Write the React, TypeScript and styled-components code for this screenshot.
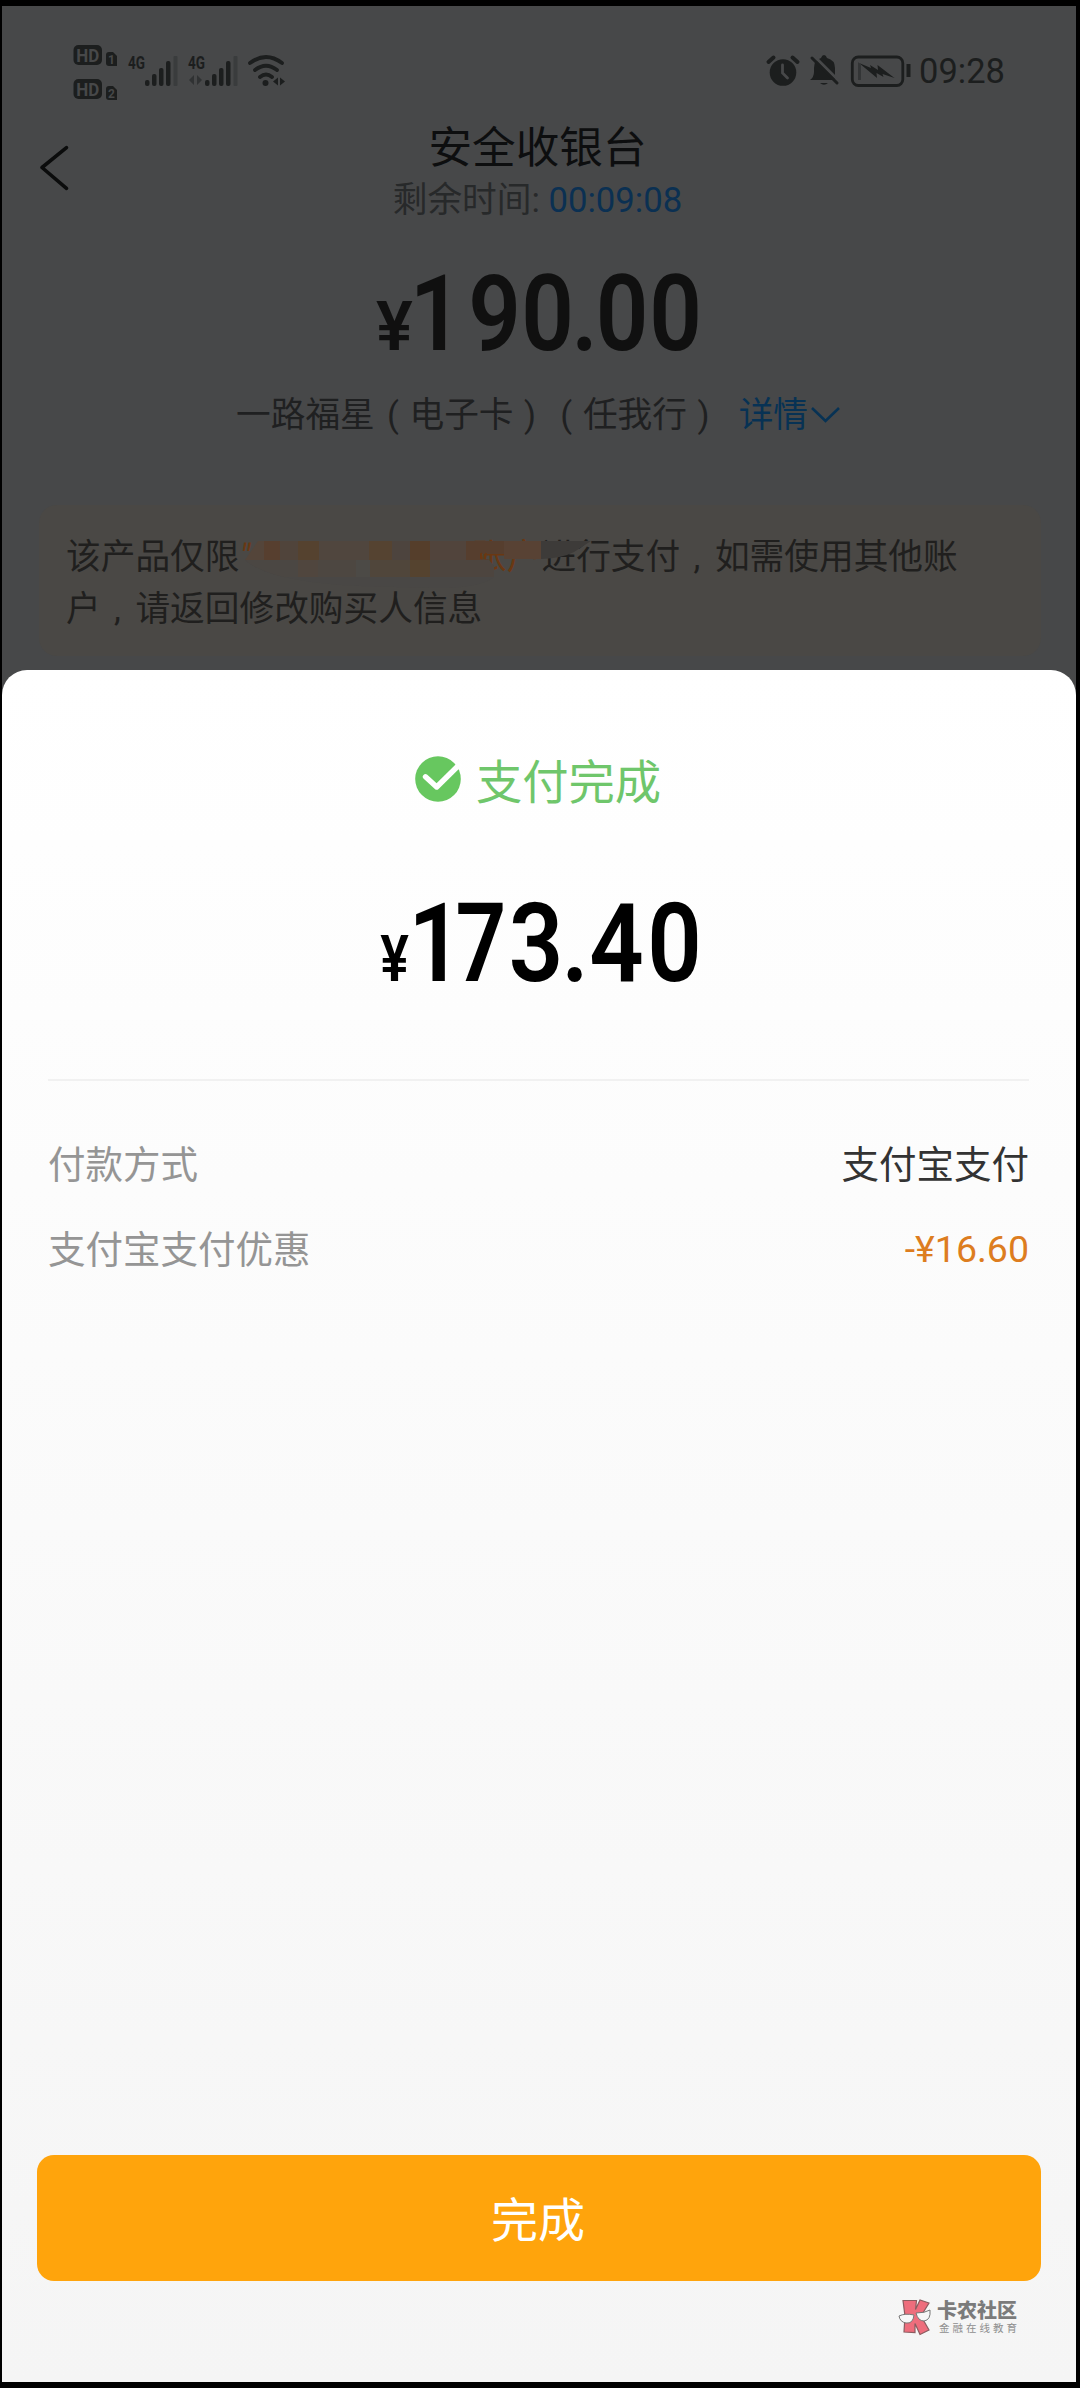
import React from 'react';
import styled, { createGlobalStyle } from 'styled-components';

const Global = createGlobalStyle`
  html, body { margin: 0; padding: 0; background: #000; }
  * { box-sizing: border-box; }
  svg { display: block; flex: none; overflow: visible; }
`;

const sans = `Roboto, "Noto Sans CJK SC", sans-serif`;

const Page = styled.main`
  width: 1080px;
  height: 2388px;
  padding: 6px 4px 6px 2px;
  background: #000;
  font-family: ${sans};
  overflow: hidden;
`;

const Screen = styled.div`
  height: 2376px;
  background: #474849;
  display: flex;
  flex-direction: column;
`;

const Cashier = styled.section`
  height: 664px;
  display: flex;
  flex-direction: column;
  flex: none;
`;

const StatusBar = styled.header`
  height: 104px;
  padding: 38px 71px 0 72px;
  display: flex;
  justify-content: space-between;
  align-items: flex-start;
`;

const StatusGroup = styled.div<{ $gap: number; $top?: number }>`
  display: flex;
  align-items: center;
  gap: ${(p) => p.$gap}px;
  padding-top: ${(p) => p.$top ?? 0}px;
`;

const Clock = styled.span`
  font-size: 34.5px;
  line-height: 40px;
  color: #1c1e1e;
  margin-left: -3px;
`;

const TitleBar = styled.div`
  height: 118px;
  display: grid;
  grid-template-columns: 110px 1fr 113px;
`;

const BackButton = styled.button`
  border: 0;
  background: none;
  padding: 36px 0 0 38px;
  display: flex;
  align-items: flex-start;
`;

const TitleText = styled.div`
  text-align: center;
`;

const Title = styled.h1`
  margin: 10px 0 0;
  font-weight: 400;
  font-size: 43.6px;
  line-height: 58px;
  color: #0d0e0f;
`;

const Countdown = styled.div`
  font-size: 34.7px;
  line-height: 44px;
  color: #27292a;
  white-space: pre;
`;

const CountdownTime = styled.span`
  color: #0b3052;
`;

const Amount = styled.div<{ $top: number; $height: number; $color: string; $left: number }>`
  margin-top: ${(p) => p.$top}px;
  height: ${(p) => p.$height}px;
  padding-left: ${(p) => p.$left}px;
  display: flex;
  align-items: baseline;
  line-height: ${(p) => p.$height}px;
  color: ${(p) => p.$color};
  font-family: Roboto, sans-serif;
  font-weight: 600;
`;

const Glyph = styled.span<{ $w: number; $gap: number; $size: number; $squeeze: number }>`
  width: ${(p) => p.$w}px;
  margin-right: ${(p) => p.$gap}px;
  flex: none;
  display: flex;
  justify-content: center;
  font-size: ${(p) => p.$size}px;
  transform: scaleX(${(p) => p.$squeeze});
`;

const Product = styled.div`
  height: 50px;
  margin-top: 16px;
  padding-left: 234px;
  display: flex;
  align-items: center;
  font-size: 34.7px;
  line-height: 50px;
  color: #1f2021;
  white-space: nowrap;
`;

const Punct = styled.span<{ $shift: number }>`
  display: inline-block;
  width: 1em;
  text-indent: ${(p) => p.$shift}em;
`;

const DetailLink = styled.a`
  margin-left: 17px;
  display: flex;
  align-items: center;
  gap: 3px;
  color: #073254;
`;

const Notice = styled.div`
  position: relative;
  margin: 65px 35px 0 37px;
  height: 151px;
  padding: 26px 20px 0 27px;
  border-radius: 18px;
  background: #4a4845;
  color: #201f1e;
  font-size: 34.7px;
  line-height: 52px;
  white-space: nowrap;
`;

const NoticeLine = styled.div`
  display: flex;
`;

const Payer = styled.span`
  width: 302px;
  flex: none;
  display: flex;
  justify-content: space-between;
  color: #6a3813;
`;

const OpenQuote = styled.span`
  font-style: italic;
`;

const Smudge = styled.svg`
  position: absolute;
  left: 191px;
  top: 0;
`;

const Sheet = styled.section`
  flex: 1;
  border-radius: 25px 25px 0 0;
  background: linear-gradient(#ffffff, #f5f5f5);
  display: flex;
  flex-direction: column;
`;

const Result = styled.div`
  margin-top: 79px;
  height: 60px;
  padding-right: 2px;
  display: flex;
  justify-content: center;
  align-items: center;
  gap: 15px;
  color: #6fc66b;
  font-size: 46.3px;
  line-height: 60px;
`;

const ResultText = styled.span`
  padding-top: 8px;
`;

const Details = styled.dl`
  margin: 70px 47px 0 46px;
  padding-top: 38px;
  border-top: 2px solid #f1f1f1;
`;

const DetailRow = styled.div`
  height: 85px;
  display: flex;
  justify-content: space-between;
  align-items: center;
  font-size: 37.5px;
`;

const Label = styled.dt`
  color: #959595;
`;

const Value = styled.dd<{ $accent?: boolean }>`
  margin: 0;
  padding-top: ${(p) => (p.$accent ? 5 : 0)}px;
  color: ${(p) => (p.$accent ? '#dd7d1f' : '#333')};
`;

const DoneButton = styled.button`
  margin: auto 35px 0 35px;
  height: 126px;
  border: 0;
  border-radius: 17px;
  background: #ffa40c;
  color: #fff;
  font-family: ${sans};
  font-size: 47px;
  line-height: 121px;
  padding: 5px 2px 0 0;
`;

const Footer = styled.footer`
  height: 101px;
  padding: 18px 59px 0 0;
  display: flex;
  justify-content: flex-end;
  gap: 5px;
`;

const BrandText = styled.div`
  display: flex;
  flex-direction: column;
  font-family: "Noto Sans CJK SC", sans-serif;
  white-space: nowrap;
`;

const BrandName = styled.span`
  font-size: 20px;
  line-height: 22px;
  font-weight: 900;
  color: #7b7b7b;
`;

const BrandTag = styled.span`
  font-size: 10.5px;
  line-height: 13px;
  letter-spacing: 3px;
  margin-left: 2px;
  width: 78px;
  color: #8e8e8e;
`;

const ink = '#1c1e1e';

const HdBadges = () => (
  <svg width="44" height="56" viewBox="74 44 44 56" fontFamily="Roboto" fontWeight="700" fill="#474849">
    {[0, 34].map((dy, i) => (
      <g key={dy} transform={`translate(0 ${dy})`}>
        <rect x="73.5" y="45" width="28.5" height="20" rx="5" fill={ink} />
        <text x="87.7" y="62" fontSize="18" textAnchor="middle" textLength="23" lengthAdjust="spacingAndGlyphs">HD</text>
        <path d="M106 55q0-3 3-3h4l4 4v10h-8q-3 0-3-3z" fill={ink} />
        <text x="111.5" y="64" fontSize="12" textAnchor="middle">{i + 1}</text>
      </g>
    ))}
  </svg>
);

const Signal = ({ data }: { data?: boolean }) => (
  <svg width="50" height="56" viewBox="128 44 50 56" fill={ink}>
    <text x="128" y="69" fontSize="19" fontFamily="Roboto" fontWeight="700" textLength="17" lengthAdjust="spacingAndGlyphs">4G</text>
    {data && <path d="M134 75v10l-5-5zM137 75v10l5-5z" fill="#303233" />}
    <rect x="145" y="80" width="4.5" height="6" rx="2" />
    <rect x="152" y="74" width="4.5" height="12" rx="2" />
    <rect x="159" y="68" width="4.5" height="18" rx="2" />
    <rect x="166" y="61" width="4.5" height="25" rx="2" />
    <rect x="173.5" y="56" width="4" height="30" rx="1" fill="#3a3c3d" />
  </svg>
);

const Wifi = () => (
  <svg width="38" height="56" viewBox="248 44 38 56" fill="none" stroke={ink} strokeWidth="3.8" strokeLinecap="round">
    <path d="M250 63Q266 51 282 63M255 70Q266 61.500 277 70M260 77Q266 72 272 77" />
    <circle cx="265.500" cy="83" r="3" fill={ink} stroke="none" />
    <path d="M278 77.500v8l-5-4zM280 77.500v8l5-4z" fill={ink} stroke="none" />
  </svg>
);

const Alarm = () => (
  <svg width="32" height="32" viewBox="768 55 32 32">
    <circle cx="784" cy="72.500" r="13.300" fill={ink} />
    <path d="M769.500 62l5-4.500M798.500 62l-5-4.500" stroke={ink} strokeWidth="4" strokeLinecap="round" />
    <path d="M783.500 65v8l5 5" stroke="#474849" strokeWidth="2.800" fill="none" strokeLinecap="round" />
  </svg>
);

const BellOff = () => (
  <svg width="30" height="32" viewBox="811 55 30 32">
    <path d="M811 80q4-3 4-8v-4q0-8 7-10 1-3 3-3t3 3q8 2 8 10v12zM821 83h8q-4 3.500-8 0z" fill={ink} />
    <path d="M815 56l26 26" stroke="#474849" strokeWidth="3" />
    <path d="M813 58l25 25" stroke={ink} strokeWidth="3" strokeLinecap="round" />
  </svg>
);

const Battery = () => (
  <svg width="60" height="32" viewBox="852 55 60 32">
    <rect x="853.300" y="57" width="50.500" height="28.500" rx="6" fill="none" stroke={ink} strokeWidth="2.800" />
    <path d="M909.500 64v13" stroke={ink} strokeWidth="4" />
    <path d="M859 62v18h3v-15z" fill="#333536" />
    <path d="M860 63l12 5-1-3 8 5-.500-5 17 13-12-4 1 3-7-4 .500 5z" fill={ink} />
  </svg>
);

const BackIcon = () => (
  <svg width="29" height="45" viewBox="0 0 29 45" fill="none" stroke="#0b0c0c" strokeWidth="3.600" strokeLinecap="round" strokeLinejoin="round">
    <path d="M26.500 1.700L2 21.500l24.500 20.800" />
  </svg>
);

const CheckIcon = () => (
  <svg width="46" height="46" viewBox="0 0 46 46">
    <circle cx="23" cy="23" r="22.800" fill="#67c75f" />
    <path d="M10.500 20.800L21.700 31 44 9" fill="none" stroke="#fff" strokeWidth="5.400" strokeLinecap="round" strokeLinejoin="round" />
  </svg>
);

const BrandMark = () => (
  <svg width="34" height="36" viewBox="0 0 34 36">
    <path d="M5 1.500h13.500l-1 9L22 1l9 3-8 13 8 14-9 4.500-5-11v9L6 33l1-16z" fill="#ee6d7c" stroke="#8b5c60" strokeWidth="1.200" />
    <path d="M1 17q6-3 15-1-1 9-8 8-6-1-7-7zM18 14q9 0 14-3 1 10-6 11-6 0-8-8z" fill="#f7f7f7" stroke="#777" strokeWidth="1" />
  </svg>
);

const upperTiles: [number, number, string][] = [
  [244, 20, '#54453a'], [264, 16, '#573f2f'], [280, 18, '#50443b'], [298, 21, '#55422f'],
  [319, 50, '#50463e'], [369, 23, '#554331'], [392, 18, '#4d443e'], [410, 20, '#553e2b'],
  [430, 36, '#51443c'], [466, 38, '#563e2e'], [504, 37, '#584234'], [541, 50, '#3d3b39'],
];
const lowerTiles: [number, number, string][] = [
  [244, 54, '#4b4743'], [298, 20, '#50463e'], [318, 38, '#4d4741'], [356, 14, '#4c4a46'],
  [370, 40, '#50463b'], [410, 20, '#55432f'], [430, 66, '#4d453f'],
];

const Mosaic = () => (
  <Smudge width="370" height="110" viewBox="230 505 370 110">
    <defs>
      <clipPath id="stroke">
        <path d="M258 541H591L574 552Q563 558 541 559H504V554H480V559H488L494 566V577Q480 589 430 588L360 586Q270 582 245 560Z" />
      </clipPath>
    </defs>
    <g clipPath="url(#stroke)">
      <rect x="240" y="560" width="256" height="30" fill="#494745" />
      {lowerTiles.map(([x, w, c]) => <rect key={x} x={x} y="559" width={w} height="18" fill={c} />)}
      {upperTiles.map(([x, w, c]) => <rect key={x} x={x} y="541" width={w} height={x >= 504 ? 18 : 19} fill={c} />)}
    </g>
    <path d="M481 553l1 6M486 553l-1 6" stroke="#6a3813" strokeWidth="2" />
  </Smudge>
);

type Cell = [ch: string, width: number, gap: number];

const total: Cell[] = [['¥', 37, 0], ['1', 46, 9], ['9', 53, 0], ['0', 53, 0], ['.', 21, 0], ['0', 54, 0], ['0', 53, 0]];
const paid: Cell[] = [['¥', 29, 4], ['1', 45, 0], ['7', 46, 7], ['3', 50, 3], ['.', 22, 5], ['4', 51, 7], ['0', 51, 0]];

const Price = ({ cells, size, yen, yenSqueeze, squeeze }: { cells: Cell[]; size: number; yen: number; yenSqueeze: number; squeeze: number }) => (
  <>
    {cells.map(([ch, w, gap], i) => (
      <Glyph
        key={i}
        $w={w}
        $gap={gap}
        $size={i === 0 ? yen : size}
        $squeeze={i === 0 ? yenSqueeze : ch === '7' ? squeeze - 0.06 : squeeze}
      >
        {ch}
      </Glyph>
    ))}
  </>
);

export default function App() {
  return (
    <Page>
      <Global />
      <Screen>
        <Cashier>
          <StatusBar>
            <StatusGroup $gap={10}>
              <HdBadges />
              <Signal />
              <Signal data />
              <Wifi />
            </StatusGroup>
            <StatusGroup $gap={11} $top={7}>
              <Alarm />
              <BellOff />
              <Battery />
              <Clock>09:28</Clock>
            </StatusGroup>
          </StatusBar>
          <TitleBar>
            <BackButton aria-label="返回"><BackIcon /></BackButton>
            <TitleText>
              <Title>安全收银台</Title>
              <Countdown>剩余时间: <CountdownTime>00:09:08</CountdownTime></Countdown>
            </TitleText>
          </TitleBar>
          <Amount $top={26} $height={120} $color="#101010" $left={374}>
            <Price size={106} yen={69} yenSqueeze={1} squeeze={0.87} cells={total} />
          </Amount>
          <Product>
            一路福星<Punct $shift={0.35}>(</Punct>电子卡<Punct $shift={0.3}>)</Punct>
            <Punct $shift={0.35}>(</Punct>任我行<Punct $shift={0.3}>)</Punct>
            <DetailLink>
              详情
              <svg width="29" height="16" viewBox="0 0 29 16" fill="none" stroke="#073254" strokeWidth="2.600">
                <path d="M1 1l13.500 13L28 1" />
              </svg>
            </DetailLink>
          </Product>
          <Notice>
            <NoticeLine>
              该产品仅限
              <Payer><OpenQuote>"</OpenQuote><span>账户</span></Payer>
              进行支付<Punct $shift={0.38}>,</Punct>如需使用其他账
            </NoticeLine>
            <NoticeLine>户<Punct $shift={0.38}>,</Punct>请返回修改购买人信息</NoticeLine>
            <Mosaic />
          </Notice>
        </Cashier>
        <Sheet>
          <Result><CheckIcon /><ResultText>支付完成</ResultText></Result>
          <Amount $top={70} $height={130} $color="#000" $left={378}>
            <Price size={108.5} yen={64} yenSqueeze={0.84} squeeze={0.88} cells={paid} />
          </Amount>
          <Details>
            <DetailRow><Label>付款方式</Label><Value>支付宝支付</Value></DetailRow>
            <DetailRow><Label>支付宝支付优惠</Label><Value $accent>-¥16.60</Value></DetailRow>
          </Details>
          <DoneButton>完成</DoneButton>
          <Footer>
            <BrandMark />
            <BrandText>
              <BrandName>卡农社区</BrandName>
              <BrandTag>金融在线教育</BrandTag>
            </BrandText>
          </Footer>
        </Sheet>
      </Screen>
    </Page>
  );
}
